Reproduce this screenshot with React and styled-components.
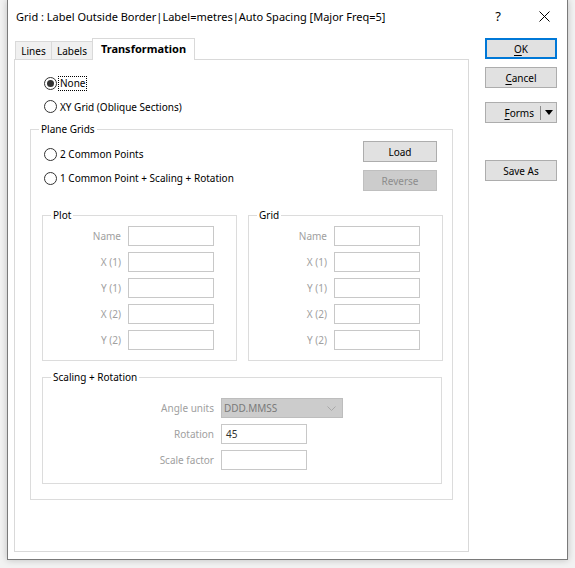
import React from "react";
import styled, { createGlobalStyle } from "styled-components";

const GlobalStyle = createGlobalStyle`
  html, body {
    margin: 0;
    padding: 0;
  }
  body {
    width: 575px;
    height: 568px;
    overflow: hidden;
    background: #f2f2f2;
    font-family: "Noto Sans", "Open Sans", sans-serif;
    font-size: 10px;
    color: #000;
  }
`;

const Window = styled.div`
  margin-left: 7px;
  width: 561px;
  height: 560px;
  box-sizing: border-box;
  background: #fff;
  border: 1px solid #7a7a7a;
  border-top: none;
  box-shadow: 0 0 7px rgba(0, 0, 0, 0.22);
  display: flex;
  flex-direction: column;
`;

const TitleBar = styled.div`
  height: 32px;
  display: flex;
  align-items: center;
  padding-left: 8px;
`;

const Title = styled.div`
  flex: 1;
  font-size: 11px;
  white-space: nowrap;
`;

const TitleButton = styled.div`
  width: 46px;
  height: 32px;
  display: flex;
  align-items: center;
  justify-content: center;
  font-size: 13px;
`;

const Body = styled.div`
  flex: 1;
  display: flex;
  align-items: flex-start;
  padding: 6px 0 0 6px;
`;

const LeftPane = styled.div`
  display: flex;
  flex-direction: column;
`;

const TabStrip = styled.div`
  height: 21px;
  display: flex;
  align-items: flex-end;
  padding-left: 1px;
`;

const Tab = styled.div`
  position: relative;
  box-sizing: border-box;
  width: ${(p) => p.$w}px;
  height: ${(p) => (p.$active ? 22 : 18)}px;
  margin-bottom: ${(p) => (p.$active ? -1 : 0)}px;
  margin-left: ${(p) => (p.$first ? 0 : -1)}px;
  border: 1px solid #d9d9d9;
  border-bottom: none;
  background: ${(p) => (p.$active ? "#fff" : "#f0f0f0")};
  font-weight: ${(p) => (p.$active ? 700 : 400)};
  font-size: ${(p) => (p.$active ? 11 : 10)}px;
  z-index: ${(p) => (p.$active ? 2 : 1)};
  display: flex;
  align-items: center;
  justify-content: center;
  padding-bottom: ${(p) => (p.$active ? 3 : 0)}px;
`;

const Panel = styled.div`
  position: relative;
  z-index: 1;
  width: 455px;
  height: 493px;
  box-sizing: border-box;
  border: 1px solid #d9d9d9;
  background: #fff;
  padding-top: 12px;
  display: flex;
  flex-direction: column;
`;

const RadioRow = styled.div`
  height: ${(p) => p.$h}px;
  margin-left: ${(p) => p.$indent}px;
  display: flex;
  align-items: center;
  gap: 3px;
`;

const RadioCircle = styled.span`
  position: relative;
  width: 13px;
  height: 13px;
  box-sizing: border-box;
  border: 1px solid #333;
  border-radius: 50%;
  background: #fff;
  flex: none;

  &::after {
    content: "";
    display: ${(p) => (p.$checked ? "block" : "none")};
    position: absolute;
    left: 2px;
    top: 2px;
    width: 7px;
    height: 7px;
    border-radius: 50%;
    background: #333;
  }
`;

const FocusLabel = styled.span`
  margin-left: -2px;
  padding: 0 1px;
  line-height: 13px;
  border: 1px dotted #000;
`;

const Group = styled.div`
  position: relative;
  box-sizing: border-box;
  width: ${(p) => p.$w}px;
  border: 1px solid #dcdcdc;
  padding: ${(p) => p.$pad};
`;

const Legend = styled.span`
  position: absolute;
  left: 8px;
  top: -8px;
  padding: 0 2px;
  line-height: 14px;
  background: #fff;
  color: #000;
`;

const PlaneGroup = styled(Group)`
  margin: 11px 0 0 15px;
  display: flex;
  flex-direction: column;
`;

const TopRow = styled.div`
  display: flex;
  justify-content: space-between;
  align-items: flex-start;
`;

const RadioColumn = styled.div`
  margin-top: 1px;
  display: flex;
  flex-direction: column;
`;

const ButtonColumn = styled.div`
  display: flex;
  flex-direction: column;
  gap: 8px;
  margin-right: 6px;
`;

const Button = styled.div`
  box-sizing: border-box;
  width: ${(p) => p.$w || 72}px;
  height: 21px;
  border: 1px solid ${(p) => (p.$disabled ? "#bfbfbf" : "#adadad")};
  background: ${(p) => (p.$disabled ? "#cccccc" : "#e1e1e1")};
  color: ${(p) => (p.$disabled ? "#8d8d8d" : "#000")};
  display: flex;
  align-items: center;
  justify-content: center;
  margin-top: ${(p) => p.$mt || 0}px;
`;

const DefaultButton = styled(Button)`
  border: 2px solid #0078d7;
`;

const SplitButton = styled(Button)`
  justify-content: flex-start;
`;

const SplitMain = styled.div`
  width: 54px;
  display: flex;
  justify-content: flex-end;
  padding-right: 6px;
  box-sizing: border-box;
`;

const SplitDivider = styled.div`
  width: 1px;
  height: 14px;
  background: #8a8a8a;
`;

const SplitArrow = styled.div`
  flex: 1;
  display: flex;
  justify-content: center;
`;

const Mnemonic = styled.span`
  text-decoration: underline;
  text-underline-offset: 2px;
`;

const GroupRow = styled.div`
  margin-top: 24px;
  display: flex;
  gap: 11px;
`;

const FieldGrid = styled.div`
  display: grid;
  grid-template-columns: ${(p) => p.$label}px auto;
  column-gap: 7px;
  row-gap: 6px;
  justify-items: start;
  align-items: center;
`;

const FieldLabel = styled.div`
  justify-self: end;
  color: #a0a0a0;
  line-height: 20px;
`;

const TextBox = styled.div`
  box-sizing: border-box;
  width: ${(p) => p.$w || 86}px;
  height: 20px;
  border: 1px solid #c8c8c8;
  background: #fff;
  padding-left: 4px;
  display: flex;
  align-items: center;
  color: #333;
`;

const Select = styled.div`
  box-sizing: border-box;
  width: 122px;
  height: 20px;
  border: 1px solid #bdbdbd;
  background: #cccccc;
  color: #7a7a7a;
  padding: 0 6px 0 2px;
  display: flex;
  align-items: center;
  justify-content: space-between;
`;

const ScalingGroup = styled(Group)`
  margin-top: 16px;
`;

const RightPane = styled.div`
  margin-left: 16px;
  display: flex;
  flex-direction: column;
`;

const Radio = ({ checked, focus, children, h = 23, indent = 29 }) => (
  <RadioRow $h={h} $indent={indent}>
    <RadioCircle $checked={checked} />
    {focus ? <FocusLabel>{children}</FocusLabel> : <span>{children}</span>}
  </RadioRow>
);

const rows = ["Name", "X (1)", "Y (1)", "X (2)", "Y (2)"];

const PointGroup = ({ title }) => (
  <Group $w={195} $pad="10px 0 10px 0">
    <Legend>{title}</Legend>
    <FieldGrid $label={78}>
      {rows.map((r) => (
        <React.Fragment key={r}>
          <FieldLabel>{r}</FieldLabel>
          <TextBox />
        </React.Fragment>
      ))}
    </FieldGrid>
  </Group>
);

export default function App() {
  return (
    <>
      <GlobalStyle />
      <Window>
        <TitleBar>
          <Title>Grid : Label Outside Border|Label=metres|Auto Spacing [Major Freq=5]</Title>
          <TitleButton>?</TitleButton>
          <TitleButton>
            <svg width="11" height="11" viewBox="0 0 11 11">
              <path d="M0.5 0.5 L10.5 10.5 M10.5 0.5 L0.5 10.5" stroke="#000" strokeWidth="1" fill="none" />
            </svg>
          </TitleButton>
        </TitleBar>
        <Body>
          <LeftPane>
            <TabStrip>
              <Tab $w={37} $first>Lines</Tab>
              <Tab $w={42}>Labels</Tab>
              <Tab $w={103} $active>Transformation</Tab>
            </TabStrip>
            <Panel>
              <Radio checked focus>None</Radio>
              <Radio>XY Grid (Oblique Sections)</Radio>
              <PlaneGroup $w={423} $pad="11px 9px 15px 11px">
                <Legend>Plane Grids</Legend>
                <TopRow>
                  <RadioColumn>
                    <Radio h={24} indent={2}>2 Common Points</Radio>
                    <Radio h={24} indent={2}>1 Common Point + Scaling + Rotation</Radio>
                  </RadioColumn>
                  <ButtonColumn>
                    <Button $w={74}>Load</Button>
                    <Button $w={74} $disabled>Reverse</Button>
                  </ButtonColumn>
                </TopRow>
                <GroupRow>
                  <PointGroup title="Plot" />
                  <PointGroup title="Grid" />
                </GroupRow>
                <ScalingGroup $w={400} $pad="20px 0 13px 0">
                  <Legend>Scaling + Rotation</Legend>
                  <FieldGrid $label={171}>
                    <FieldLabel>Angle units</FieldLabel>
                    <Select>
                      <span>DDD.MMSS</span>
                      <svg width="9" height="5" viewBox="0 0 9 5">
                        <path d="M0.5 0.5 L4.5 4.5 L8.5 0.5" stroke="#a8a8a8" fill="none" />
                      </svg>
                    </Select>
                    <FieldLabel>Rotation</FieldLabel>
                    <TextBox>45</TextBox>
                    <FieldLabel>Scale factor</FieldLabel>
                    <TextBox />
                  </FieldGrid>
                </ScalingGroup>
              </PlaneGroup>
            </Panel>
          </LeftPane>
          <RightPane>
            <DefaultButton>
              <span>
                <Mnemonic>O</Mnemonic>K
              </span>
            </DefaultButton>
            <Button $mt={8}>
              <span>
                <Mnemonic>C</Mnemonic>ancel
              </span>
            </Button>
            <SplitButton $mt={14}>
              <SplitMain>
                <span>
                  <Mnemonic>F</Mnemonic>orms
                </span>
              </SplitMain>
              <SplitDivider />
              <SplitArrow>
                <svg width="8" height="5" viewBox="0 0 8 5">
                  <path d="M0 0 L8 0 L4 5 Z" fill="#000" />
                </svg>
              </SplitArrow>
            </SplitButton>
            <Button $mt={37}>Save As</Button>
          </RightPane>
        </Body>
      </Window>
    </>
  );
}
